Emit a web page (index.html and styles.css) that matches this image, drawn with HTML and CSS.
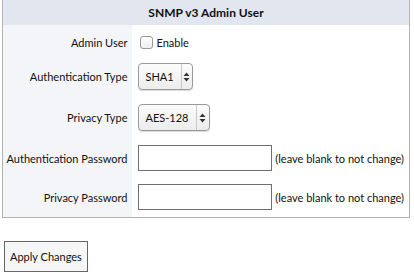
FILE: index.html
```html
<!DOCTYPE html>
<html lang="en">
<head>
    <meta charset="UTF-8">
    <title>SNMP v3 Admin User</title>
    <link rel="stylesheet" href="styles.css">
</head>
<body>
    <form class="snmp-form">
        <table class="settings">
            <colgroup>
                <col class="col-label">
                <col>
            </colgroup>
            <tr class="head">
                <th colspan="2">SNMP v3 Admin User</th>
            </tr>
            <tr class="row-admin">
                <td class="label">Admin User</td>
                <td class="field">
                    <label class="check"><span class="box"></span>Enable</label>
                </td>
            </tr>
            <tr class="row-auth">
                <td class="label">Authentication Type</td>
                <td class="field">
                    <span class="select sel-sha">
                        <span class="value">SHA1</span>
                        <span class="arrows">
                            <svg width="7" height="10" viewBox="0 0 7 10"><path d="M3.5 0.5L6.5 4H0.5z M3.5 9.5L6.5 6H0.5z" fill="#333"/></svg>
                        </span>
                    </span>
                </td>
            </tr>
            <tr class="row-priv">
                <td class="label">Privacy Type</td>
                <td class="field">
                    <span class="select sel-aes">
                        <span class="value">AES-128</span>
                        <span class="arrows">
                            <svg width="7" height="10" viewBox="0 0 7 10"><path d="M3.5 0.5L6.5 4H0.5z M3.5 9.5L6.5 6H0.5z" fill="#333"/></svg>
                        </span>
                    </span>
                </td>
            </tr>
            <tr class="row-authpw">
                <td class="label">Authentication Password</td>
                <td class="field">
                    <input type="password" class="pw">
                    <span class="hint">(leave blank to not change)</span>
                </td>
            </tr>
            <tr class="row-privpw">
                <td class="label">Privacy Password</td>
                <td class="field">
                    <input type="password" class="pw">
                    <span class="hint">(leave blank to not change)</span>
                </td>
            </tr>
        </table>

        <button type="submit" class="apply">Apply Changes</button>
    </form>
</body>
</html>
```

FILE: styles.css
```css
* {
    margin: 0;
    padding: 0;
    box-sizing: border-box;
}

body {
    margin: 0;
    padding: 0 4px 0 2px;
    font-family: Lato, "Open Sans", sans-serif;
    font-size: 11px;
    color: #111;
    background: #fff;
}

.settings {
    width: 408px;
    table-layout: fixed;
    border-collapse: collapse;
    border: 1px solid #b3b3b3;
    border-top: none;
}

.col-label {
    width: 129px;
}

.settings th {
    height: 25px;
    background: #e2e6ee;
    font-weight: bold;
    font-size: 12px;
    text-align: center;
    vertical-align: middle;
}

.settings td {
    vertical-align: middle;
    white-space: nowrap;
}

.settings td.label {
    background: #f4f5f9;
    text-align: right;
    padding-right: 4px;
}

.settings td.field {
    padding-left: 6px;
}

.row-admin td {
    height: 35px;
}

.row-auth td {
    padding-top: 3px;
    padding-bottom: 7px;
}

.row-priv td,
.row-authpw td {
    padding-top: 7px;
    padding-bottom: 7px;
}

.row-privpw td {
    padding-top: 6px;
    padding-bottom: 7px;
}

.check {
    display: flex;
    align-items: center;
    gap: 4px;
}

.check .box {
    display: inline-block;
    width: 13px;
    height: 13px;
    border: 1px solid #999;
    border-radius: 3px;
    background: linear-gradient(#fff, #eee);
    margin-left: 2px;
}

.select {
    display: inline-flex;
    height: 27px;
    border: 1px solid #9a9a9a;
    border-radius: 4px;
    background: linear-gradient(#fcfcfc, #ececec);
    box-shadow: 0 1px 1px rgba(0, 0, 0, 0.15);
    align-items: stretch;
    vertical-align: middle;
}

.select .value {
    display: flex;
    align-items: center;
    padding: 0 7px;
    flex: 1;
}

.select .arrows {
    width: 15px;
    border-left: 1px solid #c8c8c8;
    display: flex;
    align-items: center;
    justify-content: center;
}

.sel-sha {
    width: 55px;
}

.sel-aes {
    width: 72px;
}

.pw {
    width: 134px;
    height: 26px;
    border: 1px solid #6f6f6f;
    background: #fff;
    vertical-align: middle;
}

.hint {
    margin-left: 1px;
    vertical-align: middle;
}

.apply {
    margin-top: 23px;
    margin-left: 2px;
    height: 31px;
    padding: 0 5px;
    background: #f6f6f6;
    border: 1px solid #666;
    font-family: inherit;
    font-size: 11px;
    color: #111;
}
```
